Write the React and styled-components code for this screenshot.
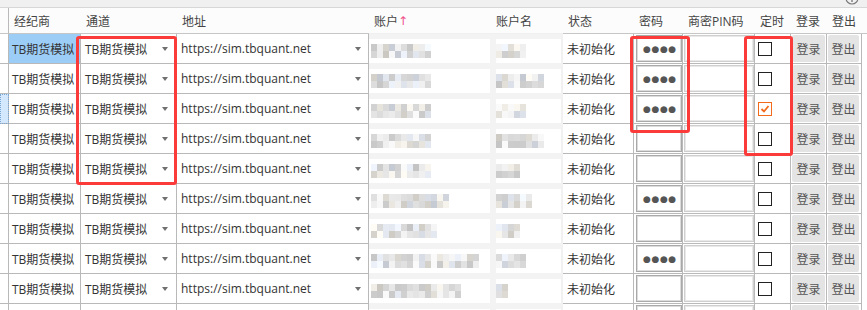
import React from "react";
import styled, { createGlobalStyle } from "styled-components";

const GlobalStyle = createGlobalStyle`
  html, body { margin: 0; padding: 0; background: #fff; overflow: hidden; }
  body {
    font-family: "Open Sans", "Noto Sans CJK SC", sans-serif;
    font-size: 12px;
    color: #333;
  }
`;

const COLS = "9px 72px 96px 192px 122px 72px 71px 49px 72px 36px 36px 35px 5px";
const LINE = "#b9b9b9";

const Page = styled.div`
  position: relative;
  width: 867px;
  height: 310px;
  overflow: hidden;
`;

const TopBar = styled.div`
  height: 7px;
  background: #f0f0f0;
  border-bottom: 1px solid #d7d7d7;
  display: flex;
  justify-content: flex-end;
  overflow: hidden;
`;

const HelpIcon = styled.svg`
  flex: none;
  margin: -9px 8px 0 0;
`;

const Grid = styled.div`
  display: grid;
  grid-template-columns: ${COLS};
`;

const HeadCell = styled.div`
  height: 26px;
  box-sizing: border-box;
  border-bottom: 1px solid ${(p) => (p.$soft ? "#f0f0f0" : "#c6c6c6")};
  border-right: ${(p) => (p.$edge ? `1px solid ${LINE}` : "none")};
  background: #fcfcfc;
  padding-left: 5px;
  display: flex;
  align-items: center;
  color: #444;
  white-space: nowrap;
`;

const SortArrow = styled.span`
  color: #f0508a;
  font-family: "DejaVu Sans", sans-serif;
  font-size: 12px;
`;

const RowHead = styled.div`
  height: 30px;
  box-sizing: border-box;
  border-right: 1px solid ${LINE};
  border-bottom: 1px solid ${LINE};
  background: ${(p) => (p.$focus ? "#d3e8fc" : "#fff")};
  outline: ${(p) => (p.$focus ? "1px dotted #7aa6d6" : "none")};
  outline-offset: -1px;
`;

const Cell = styled.div`
  height: 30px;
  box-sizing: border-box;
  border-right: 1px solid ${LINE};
  border-bottom: 1px solid ${LINE};
  background: ${(p) => (p.$selected ? "#9ccdf7" : "#fff")};
  padding-left: ${(p) => p.$pad ?? 4}px;
  padding-right: ${(p) => p.$padRight ?? 0}px;
  display: flex;
  align-items: center;
  justify-content: ${(p) => (p.$spread ? "space-between" : "flex-start")};
  white-space: nowrap;
  overflow: hidden;
`;

const Filler = styled.div`
  height: 30px;
  background: #fff;
`;

const Arrow = styled.span`
  width: 0;
  height: 0;
  border-left: 3px solid transparent;
  border-right: 3px solid transparent;
  border-top: 4px solid #707070;
`;

const BlurCell = styled.div`
  height: 30px;
  box-sizing: border-box;
  background: #fff;
  border-top: 5px solid #f3f3f3;
  border-bottom: 1px solid #f3f3f3;
  border-left: ${(p) => (p.$band ? "5px solid #f3f3f3" : "0")};
  border-right: ${(p) => (p.$end ? "2px solid #f1f1f1" : "1px solid #f3f3f3")};
  padding-left: ${(p) => p.$pad}px;
  display: flex;
  align-items: center;
  overflow: hidden;
`;

const Mosaic = styled.div`
  display: grid;
  grid-template-columns: repeat(${(p) => p.$n}, 6px);
  grid-auto-rows: 7px;
`;

const Block = styled.span`
  background: ${(p) => p.$c};
`;

const Box = styled.div`
  width: ${(p) => p.$w}px;
  height: 27px;
  box-sizing: border-box;
  border: 1px solid ${(p) => (p.$light ? "#cfcfcf" : "#a9a9a9")};
  box-shadow: inset 0 0 0 1px ${(p) => (p.$light ? "#e9e9e9" : "#dcdcdc")};
  background: #fff;
  display: flex;
  align-items: center;
  padding-left: 6px;
`;

const Dots = styled.span`
  font-family: "DejaVu Sans", sans-serif;
  font-size: 9px;
  letter-spacing: 0.6px;
  color: #555;
`;

const Check = styled.span`
  width: 14px;
  height: 14px;
  box-sizing: border-box;
  border: 1px solid ${(p) => (p.$on ? "#f26b1d" : "#222")};
  background: #fff;
  display: flex;
  align-items: center;
  justify-content: center;
`;

const Button = styled.div`
  width: ${(p) => p.$w}px;
  height: 27px;
  background: #e4e4e4;
  border-radius: 2px;
  color: #555;
  display: flex;
  align-items: center;
  justify-content: center;
`;

const Mark = styled.div`
  position: absolute;
  left: ${(p) => p.$x}px;
  top: ${(p) => p.$y}px;
  width: ${(p) => p.$w}px;
  height: ${(p) => p.$h}px;
  box-sizing: border-box;
  border: 3px solid #fb3a3a;
  border-radius: 3px;
  pointer-events: none;
`;

const headers = [
  { t: "", edge: true },
  { t: "经纪商" },
  { t: "通道" },
  { t: "地址" },
  { t: "账户", sort: true, soft: true },
  { t: "账户名", soft: true },
  { t: "状态" },
  { t: "密码" },
  { t: "商密PIN码" },
  { t: "定时" },
  { t: "登录" },
  { t: "登出" },
  { t: "" },
];

const rows = [
  { acct: 10, name: 5, pw: true, selected: true },
  { acct: 10, name: 8, pw: true },
  { acct: 10, name: 5, pw: true, checked: true, focus: true },
  { acct: 10, name: 8 },
  { acct: 10, name: 4 },
  { acct: 13, name: 6, pw: true },
  { acct: 11, name: 4 },
  { acct: 18, name: 5, pw: true },
  { acct: 15, name: 2 },
];

function shades(seed, n) {
  let s = seed * 7919 + 13;
  const rnd = () => {
    s = (s * 9301 + 49297) % 233280;
    return s / 233280;
  };
  const out = [];
  for (let r = 0; r < 2; r++) {
    for (let i = 0; i < n; i++) {
      const light = rnd() < 0.4;
      const g = Math.round(light ? 230 + rnd() * 20 : 196 + rnd() * 34);
      const t = rnd();
      const c = (v) => Math.max(0, Math.min(255, v));
      const rgb =
        t < 0.2 ? [g - 4, g + 1, g + 9] : t < 0.4 ? [g + 6, g + 2, g - 4] : [g, g, g];
      out.push(`rgb(${c(rgb[0])},${c(rgb[1])},${c(rgb[2])})`);
    }
  }
  return out;
}

function Blur({ seed, n }) {
  return (
    <Mosaic $n={n}>
      {shades(seed, n).map((c, i) => (
        <Block key={i} $c={c} />
      ))}
    </Mosaic>
  );
}

function CheckMark() {
  return (
    <svg width="10" height="10" viewBox="0 0 10 10">
      <polyline points="1.5,5 4,7.5 8.5,2" fill="none" stroke="#f26b1d" strokeWidth="1.8" />
    </svg>
  );
}

function DataRow({ r, i }) {
  return (
    <>
      <RowHead $focus={r.focus} />
      <Cell $selected={r.selected} $pad={3}>TB期货模拟</Cell>
      <Cell $pad={4} $padRight={8} $spread>
        TB期货模拟
        <Arrow />
      </Cell>
      <Cell $pad={4} $padRight={7} $spread>
        https://sim.tbquant.net
        <Arrow />
      </Cell>
      <BlurCell $pad={2}>
        <Blur seed={i * 2 + 1} n={r.acct} />
      </BlurCell>
      <BlurCell $band $end $pad={0}>
        <Blur seed={i * 2 + 2} n={r.name} />
      </BlurCell>
      <Cell $pad={4}>未初始化</Cell>
      <Cell $pad={2}>
        <Box $w={46}>{r.pw && <Dots>●●●●</Dots>}</Box>
      </Cell>
      <Cell $pad={1}>
        <Box $w={70} $light />
      </Cell>
      <Cell $pad={3}>
        <Check $on={r.checked}>{r.checked && <CheckMark />}</Check>
      </Cell>
      <Cell $pad={1}>
        <Button $w={33}>登录</Button>
      </Cell>
      <Cell $pad={1}>
        <Button $w={31}>登出</Button>
      </Cell>
      <Filler />
    </>
  );
}

/* the next row only peeks in at the bottom edge: its grid lines show, its text does not */
function TailRow() {
  return (
    <>
      <RowHead />
      <Cell />
      <Cell />
      <Cell />
      <BlurCell $pad={2} />
      <BlurCell $band $end $pad={0} />
      <Cell />
      <Cell $pad={2}>
        <Box $w={46} />
      </Cell>
      <Cell $pad={1}>
        <Box $w={70} $light />
      </Cell>
      <Cell />
      <Cell $pad={1}>
        <Button $w={33} />
      </Cell>
      <Cell $pad={1}>
        <Button $w={31} />
      </Cell>
      <Filler />
    </>
  );
}

export default function App() {
  return (
    <Page>
      <GlobalStyle />
      <TopBar>
        <HelpIcon width="14" height="14" viewBox="0 0 14 14">
          <circle cx="7" cy="7" r="6" fill="none" stroke="#7a7a7a" strokeWidth="1.2" />
          <circle cx="7" cy="10" r="0.9" fill="#7a7a7a" />
        </HelpIcon>
      </TopBar>
      <Grid>
        {headers.map((h, i) => (
          <HeadCell key={i} $edge={h.edge} $soft={h.soft}>
            {h.t}
            {h.sort && <SortArrow>↑</SortArrow>}
          </HeadCell>
        ))}
        {rows.map((r, i) => (
          <DataRow key={i} r={r} i={i} />
        ))}
        <TailRow />
      </Grid>
      <Mark $x={76} $y={36} $w={101} $h={149} />
      <Mark $x={630} $y={36} $w={60} $h={97} />
      <Mark $x={744} $y={36} $w={49} $h={120} />
    </Page>
  );
}
